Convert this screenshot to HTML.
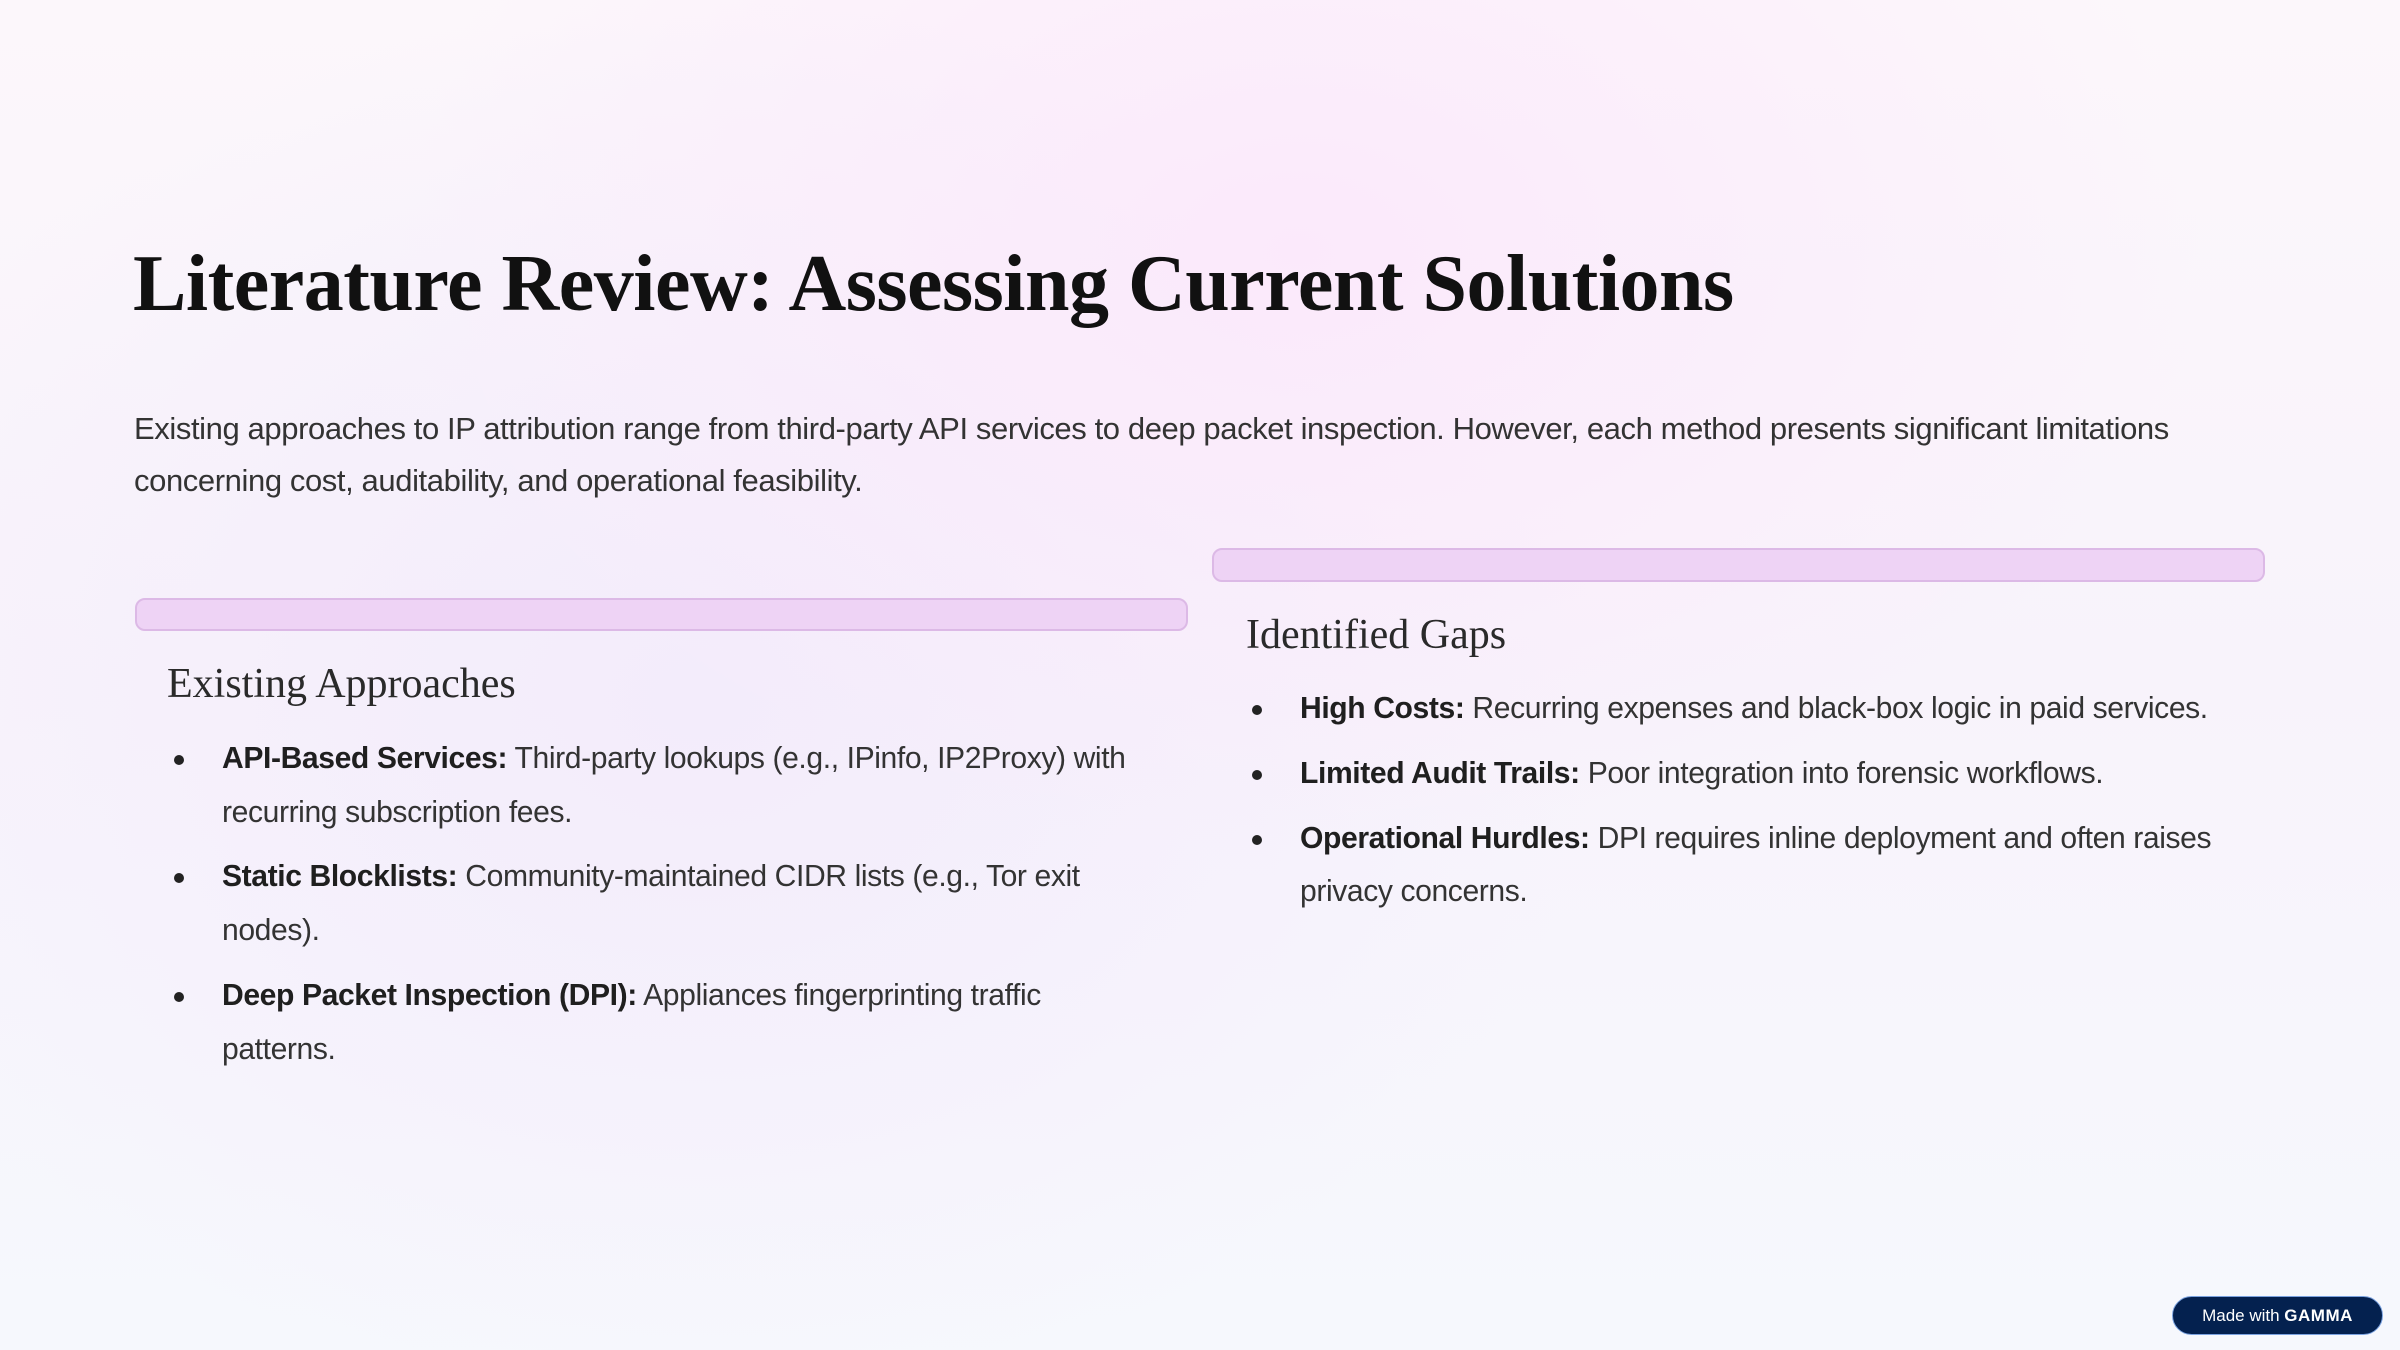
<!DOCTYPE html>
<html><head><meta charset="utf-8"><style>
html,body{margin:0;padding:0}
body{width:2400px;height:1350px;overflow:hidden;position:relative;
background:radial-gradient(ellipse 900px 600px at 1300px 250px,#fbe9fb 0%,rgba(251,233,251,0) 100%),
radial-gradient(ellipse 900px 700px at 700px 700px,#f3ecfb 0%,rgba(243,236,251,0) 100%),
linear-gradient(180deg,#fcf7fb 0%,#f8f3fb 50%,#f6f8fd 100%);
font-family:"Liberation Sans",sans-serif;color:#2b2b2b}
.a{position:absolute;white-space:nowrap}
.t{font-family:"Liberation Serif",serif;font-weight:bold;font-size:80px;color:#111;left:133px;top:236px;line-height:96px;letter-spacing:-0.5px}
.p{font-size:30.1px;line-height:52px;color:#333;letter-spacing:-0.4px}
.q{font-size:31px}
.h{font-family:"Liberation Serif",serif;font-size:42px;color:#2a2a2a;line-height:52px}
.bar{position:absolute;background:#eed3f5;border:2px solid #dcb9e6;border-radius:10px;box-sizing:border-box}
b{color:#1f1f1f}
.dot{position:absolute;width:10px;height:10px;border-radius:50%;background:#222}
</style></head><body>
<div class="a t">Literature Review: Assessing Current Solutions</div>
<div class="a p q" style="left:134px;top:403px">Existing approaches to IP attribution range from third-party API services to deep packet inspection. However, each method presents significant limitations</div>
<div class="a p q" style="left:134px;top:455px">concerning cost, auditability, and operational feasibility.</div>

<div class="bar" style="left:135px;top:598px;width:1053px;height:33px"></div>
<div class="bar" style="left:1212px;top:548px;width:1053px;height:34px"></div>

<div class="a h" style="left:167px;top:658px">Existing Approaches</div>
<div class="dot" style="left:174px;top:755px"></div>
<div class="a p" style="left:222px;top:733px"><b>API-Based Services:</b> Third-party lookups (e.g., IPinfo, IP2Proxy) with</div>
<div class="a p" style="left:222px;top:787px">recurring subscription fees.</div>
<div class="dot" style="left:174px;top:873px"></div>
<div class="a p" style="left:222px;top:851px"><b>Static Blocklists:</b> Community-maintained CIDR lists (e.g., Tor exit</div>
<div class="a p" style="left:222px;top:905px">nodes).</div>
<div class="dot" style="left:174px;top:992px"></div>
<div class="a p" style="left:222px;top:970px"><b>Deep Packet Inspection (DPI):</b> Appliances fingerprinting traffic</div>
<div class="a p" style="left:222px;top:1024px">patterns.</div>

<div class="a h" style="left:1246px;top:609px">Identified Gaps</div>
<div class="dot" style="left:1252px;top:705px"></div>
<div class="a p" style="left:1300px;top:683px"><b>High Costs:</b> Recurring expenses and black-box logic in paid services.</div>
<div class="dot" style="left:1252px;top:770px"></div>
<div class="a p" style="left:1300px;top:748px"><b>Limited Audit Trails:</b> Poor integration into forensic workflows.</div>
<div class="dot" style="left:1252px;top:835px"></div>
<div class="a p" style="left:1300px;top:813px"><b>Operational Hurdles:</b> DPI requires inline deployment and often raises</div>
<div class="a p" style="left:1300px;top:866px">privacy concerns.</div>

<div class="a" style="left:2172px;top:1296px;width:211px;height:39px;border-radius:20px;background:#04214f;border:1px solid #7aa2e0;box-sizing:border-box;color:#fff;font-size:17px;line-height:37px;text-align:center">Made with <b style="color:#fff;font-weight:900;letter-spacing:0.5px">GAMMA</b></div>
</body></html>
